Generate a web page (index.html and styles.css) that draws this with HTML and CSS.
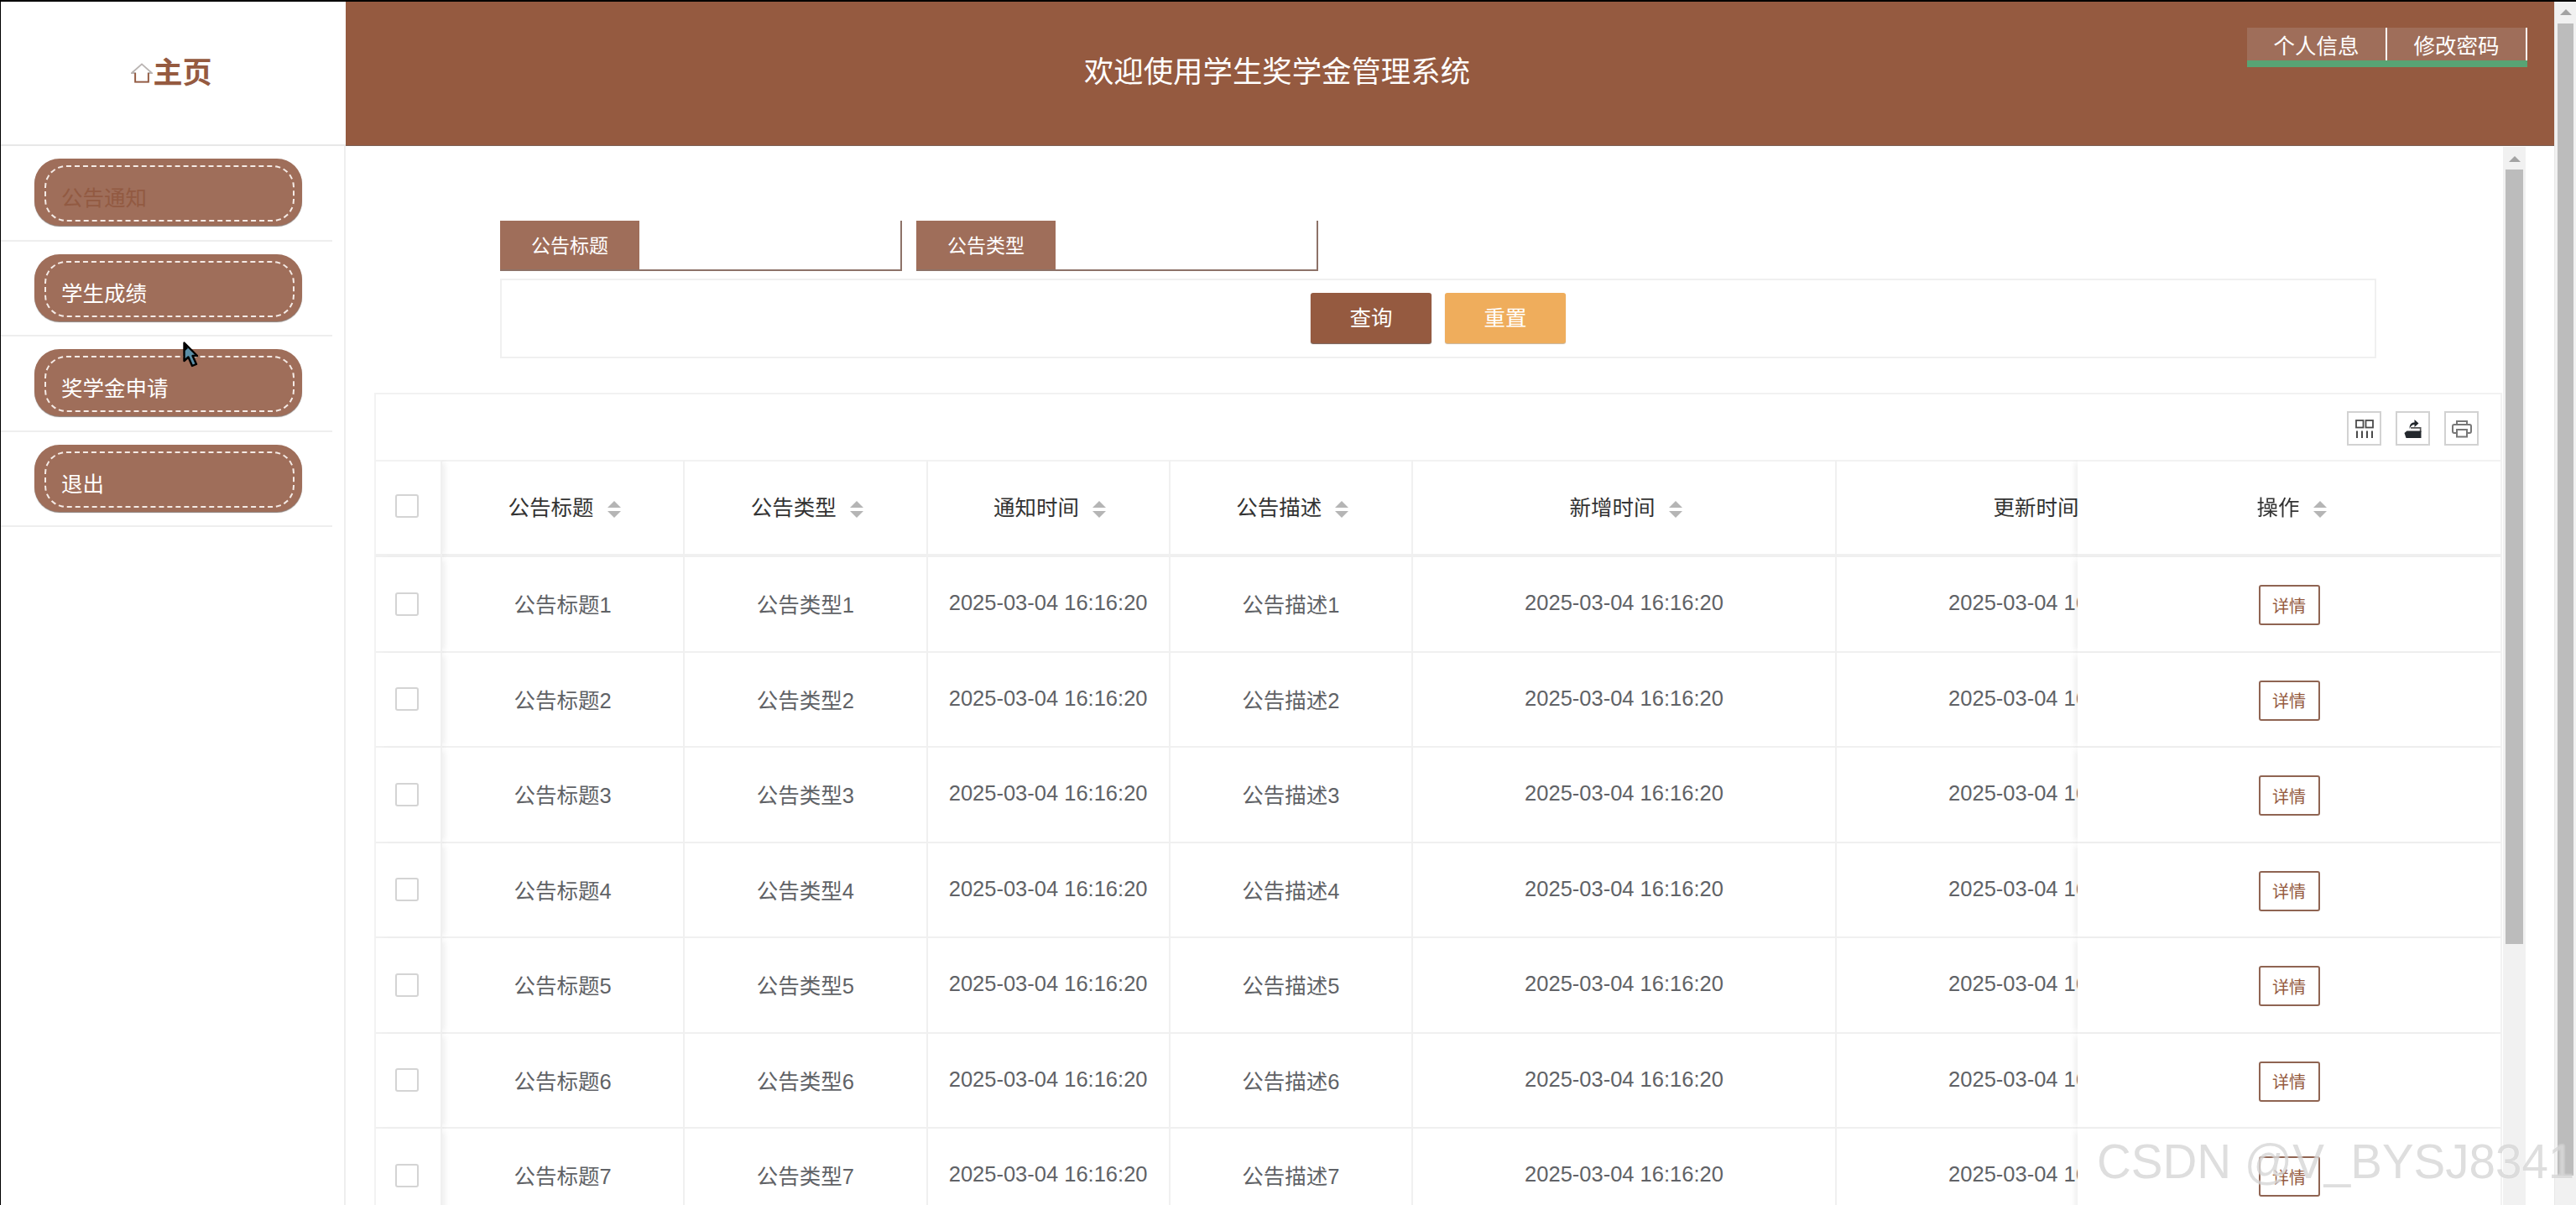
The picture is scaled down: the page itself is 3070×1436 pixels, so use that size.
FILE: index.html
```html
<!DOCTYPE html>
<html lang="zh-CN">
<head>
  <meta charset="utf-8">
  <title>学生奖学金管理系统</title>
  <link rel="stylesheet" href="styles.css">
</head>
<body>
  <div class="page">
    <div class="logo">
      <svg class="logo-icon" viewBox="0 0 28 26" width="26" height="24">
        <path d="M1 13 L14 1.5 L27 13 H22.5 V24.5 H5.5 V13 Z" fill="none" stroke="#b9b4b2" stroke-width="2"/>
        <path d="M5.5 13 V24.5 H22.5 V13" fill="none" stroke="#955a40" stroke-width="2"/>
      </svg>
      <span>主页</span>
    </div>
    <header class="topbar">
      <h1 class="topbar-title">欢迎使用学生奖学金管理系统</h1>
      <div class="topbar-links">
        <a class="topbar-link">个人信息</a>
        <a class="topbar-link">修改密码</a>
      </div>
    </header>
    <nav class="sidebar">
      <div class="menu-item"><div class="menu-pill current"><span>公告通知</span></div></div>
      <div class="menu-item"><div class="menu-pill"><span>学生成绩</span></div></div>
      <div class="menu-item"><div class="menu-pill"><span>奖学金申请</span></div></div>
      <div class="menu-item"><div class="menu-pill"><span>退出</span></div></div>
    </nav>
    <main class="main">
      <div class="content">
        <div class="search-fields">
          <div class="field"><label class="field-label">公告标题</label><div class="field-input"></div></div>
          <div class="field"><label class="field-label">公告类型</label><div class="field-input"></div></div>
        </div>
        <div class="search-actions">
          <button class="btn btn-query">查询</button>
          <button class="btn btn-reset">重置</button>
        </div>
        <section class="table-card">
          <div class="toolbar">
            <div class="tool-btn">
              <svg viewBox="0 0 22 22" width="22" height="22" fill="none" stroke="#4a4a4a">
                <rect x="1" y="1" width="8.5" height="8.5" stroke-width="1.8"/>
                <rect x="12.5" y="1" width="8.5" height="8.5" stroke-width="1.8"/>
                <path d="M2 13.5 V22 M8 13.5 V22 M14 13.5 V22 M20 13.5 V22" stroke-width="2"/>
              </svg>
            </div>
            <div class="tool-btn">
              <svg viewBox="0 0 22 22" width="22" height="22">
                <path d="M8 9 H20.5 V15 H18.8 V10.8 H8 Z" fill="#555"/>
                <path d="M0.5 16 L3.5 13.5 H20.5 V22 H2.5 Z" fill="#23282d"/>
                <path d="M6.5 11 C6.5 5.5 9 3.5 12.5 3.5 V0 L17.5 4.5 L12.5 9 V6 C10 6 8 8 6.5 11 Z" fill="#23282d"/>
              </svg>
            </div>
            <div class="tool-btn">
              <svg viewBox="0 0 24 22" width="24" height="22" fill="none" stroke="#777" stroke-width="2">
                <path d="M6 6 V2 H18 V6"/>
                <path d="M6 16 H3 Q1 16 1 14 V8 Q1 6 3 6 H21 Q23 6 23 8 V14 Q23 16 21 16 H18"/>
                <path d="M6 12 H18 V20.5 H6 Z"/>
              </svg>
            </div>
          </div>
          <div class="table-wrap">
            <table class="data-table">
              <colgroup>
                <col class="col-check"><col class="col-short"><col class="col-short"><col class="col-short"><col class="col-short"><col class="col-long"><col class="col-long"><col class="col-op">
              </colgroup>
              <thead>
                <tr>
                  <th class="fixed-left"><span class="checkbox"></span></th>
                  <th>公告标题<i class="sort"></i></th>
                  <th>公告类型<i class="sort"></i></th>
                  <th>通知时间<i class="sort"></i></th>
                  <th>公告描述<i class="sort"></i></th>
                  <th>新增时间<i class="sort"></i></th>
                  <th>更新时间<i class="sort"></i></th>
                  <th class="fixed-right">操作<i class="sort"></i></th>
                </tr>
              </thead>
              <tbody>
                <tr><td class="fixed-left"><span class="checkbox"></span></td><td>公告标题1</td><td>公告类型1</td><td>2025-03-04 16:16:20</td><td>公告描述1</td><td>2025-03-04 16:16:20</td><td>2025-03-04 16:16:20</td><td class="fixed-right"><button class="btn-detail">详情</button></td></tr>
                <tr><td class="fixed-left"><span class="checkbox"></span></td><td>公告标题2</td><td>公告类型2</td><td>2025-03-04 16:16:20</td><td>公告描述2</td><td>2025-03-04 16:16:20</td><td>2025-03-04 16:16:20</td><td class="fixed-right"><button class="btn-detail">详情</button></td></tr>
                <tr><td class="fixed-left"><span class="checkbox"></span></td><td>公告标题3</td><td>公告类型3</td><td>2025-03-04 16:16:20</td><td>公告描述3</td><td>2025-03-04 16:16:20</td><td>2025-03-04 16:16:20</td><td class="fixed-right"><button class="btn-detail">详情</button></td></tr>
                <tr><td class="fixed-left"><span class="checkbox"></span></td><td>公告标题4</td><td>公告类型4</td><td>2025-03-04 16:16:20</td><td>公告描述4</td><td>2025-03-04 16:16:20</td><td>2025-03-04 16:16:20</td><td class="fixed-right"><button class="btn-detail">详情</button></td></tr>
                <tr><td class="fixed-left"><span class="checkbox"></span></td><td>公告标题5</td><td>公告类型5</td><td>2025-03-04 16:16:20</td><td>公告描述5</td><td>2025-03-04 16:16:20</td><td>2025-03-04 16:16:20</td><td class="fixed-right"><button class="btn-detail">详情</button></td></tr>
                <tr><td class="fixed-left"><span class="checkbox"></span></td><td>公告标题6</td><td>公告类型6</td><td>2025-03-04 16:16:20</td><td>公告描述6</td><td>2025-03-04 16:16:20</td><td>2025-03-04 16:16:20</td><td class="fixed-right"><button class="btn-detail">详情</button></td></tr>
                <tr><td class="fixed-left"><span class="checkbox"></span></td><td>公告标题7</td><td>公告类型7</td><td>2025-03-04 16:16:20</td><td>公告描述7</td><td>2025-03-04 16:16:20</td><td>2025-03-04 16:16:20</td><td class="fixed-right"><button class="btn-detail">详情</button></td></tr>
              </tbody>
            </table>
          </div>
        </section>
      </div>
      <div class="scrollbar inner-scrollbar"><i class="scroll-arrow"></i><div class="scroll-thumb"></div></div>
    </main>
  </div>
  <div class="scrollbar outer-scrollbar"><i class="scroll-arrow"></i><div class="scroll-thumb"></div></div>

  <!-- mouse pointer caught in the screenshot -->
  <svg class="pointer" viewBox="0 0 18 31" width="18" height="31">
    <path d="M1.5 1.5 V23 L6.5 18.5 L11 29 L16 27 L11.5 17 H17 Z" fill="#5c8ea6" stroke="#000" stroke-width="2.4" stroke-linejoin="round"/>
    <path d="M1.5 1.5 V12 L6 8 Z" fill="#000"/>
  </svg>
  <div class="watermark">CSDN @V_BYSJ8341</div>
</body>
</html>
```

FILE: styles.css
```css
* {
  box-sizing: border-box;
}

html, body {
  height: 100%;
  margin: 0;
}

body {
  display: flex;
  overflow: hidden;
  border-top: 2px solid #000;
  border-left: 1px solid #000;
  background: #fff;
  font-family: "Liberation Sans", "Noto Sans CJK SC", sans-serif;
  color: #333;
}

.page {
  flex: 1;
  min-width: 0;
  display: grid;
  grid-template-columns: 411px 1fr;
  grid-template-rows: 172px 1fr;
}

/* logo and top bar */
.logo {
  display: flex;
  justify-content: center;
  align-items: center;
  border-bottom: 2px solid #e8e8e8;
  padding: 0 4px 8px 0;
  color: #955a40;
  font-size: 35px;
  font-weight: bold;
}

.logo-icon {
  margin-top: 8px;
}

.topbar {
  position: relative;
  display: flex;
  justify-content: center;
  align-items: center;
  padding: 0 412px 11px 0;
  background: #955a40;
  border-bottom: 1px solid #7d6054;
}

.topbar-title {
  margin: 0;
  color: #fff;
  font-size: 35.4px;
  font-weight: normal;
}

.topbar-links {
  position: absolute;
  top: 31px;
  right: 32px;
  display: flex;
  border-bottom: 8px solid #58a474;
}

.topbar-link {
  width: 167px;
  height: 39px;
  line-height: 44px;
  text-align: center;
  background: #9f6e5a;
  border-right: 2px solid #fff;
  color: #fff;
  font-size: 25.5px;
}

/* sidebar */
.sidebar {
  border-right: 2px solid #eeeeee;
  padding-right: 14px;
}

.menu-item {
  height: 113.5px;
  padding: 15px 0 0 40px;
  border-bottom: 2px solid #eeeeee;
}

.menu-pill {
  width: 319px;
  height: 80px;
  padding: 8px 9px 5px 12px;
  border-radius: 30px;
  background: #9f6e5a;
  box-shadow: 0 1px 1px #8a7f7a;
}

.menu-pill span {
  display: block;
  height: 100%;
  padding: 18px 0 0 18px;
  border: 2px dashed #f5ebe6;
  border-radius: 26px;
  color: #fff;
  font-size: 25.5px;
  line-height: 38px;
}

.menu-pill.current span {
  color: #925a42;
}

/* main area */
.main {
  display: flex;
  min-height: 0;
  padding-right: 34px;
}

.content {
  flex: 1;
  min-width: 0;
  padding: 89px 0 0 34px;
  overflow: hidden;
}

.search-fields {
  display: flex;
  gap: 17px;
  margin-left: 150px;
}

.field {
  display: flex;
  width: 479px;
  height: 60px;
  border-right: 2px solid #8d7268;
  border-bottom: 2px solid #8d7268;
}

.field-label {
  width: 166px;
  background: #9f6e5a;
  color: #fff;
  font-size: 23px;
  line-height: 60px;
  text-align: center;
}

.field-input {
  flex: 1;
}

.search-actions {
  display: flex;
  justify-content: center;
  gap: 16px;
  width: 2236px;
  height: 95px;
  margin: 9px 0 0 150px;
  padding-top: 15px;
  border: 2px solid #f0f0f0;
}

.btn {
  width: 144px;
  height: 60px;
  padding: 0 0 6px;
  border: none;
  border-radius: 3px;
  color: #fff;
  font-family: inherit;
  font-size: 25.5px;
}

.btn-query {
  background: #955a40;
  box-shadow: 0 1px 1px #6f5549;
}

.btn-reset {
  background: #efad5c;
  box-shadow: 0 1px 1px #c9b08e;
}

/* table */
.table-card {
  width: 2536px;
  margin-top: 41px;
  border: 2px solid #f2f2f2;
  border-bottom: none;
}

.toolbar {
  display: flex;
  justify-content: flex-end;
  gap: 17px;
  height: 78px;
  padding: 20px 26px 0 0;
}

.tool-btn {
  display: flex;
  justify-content: center;
  align-items: center;
  width: 41px;
  height: 41px;
  border: 2px solid #d2d2d2;
}

.table-wrap {
  overflow: hidden;
}

.data-table {
  width: 2750px;
  table-layout: fixed;
  border-collapse: separate;
  border-spacing: 0;
  font-size: 25.5px;
}

.col-check { width: 79px; }
.col-short { width: 289.25px; }
.col-long { width: 505px; }
.col-op { width: 504px; }

th, td {
  text-align: center;
  white-space: nowrap;
  overflow: hidden;
  background: #fff;
  border-right: 2px solid #f0f0f0;
  border-bottom: 2px solid #f0f0f0;
}

th {
  height: 116px;
  padding: 0 0 6px 4px;
  border-top: 2px solid #f2f2f2;
  border-bottom-width: 4px;
  color: #333;
  font-weight: normal;
}

td {
  height: 113.5px;
  padding: 0 0 2px;
  color: #606266;
}

th.fixed-left,
td.fixed-left {
  padding-left: 0;
  padding-right: 3px;
}

.fixed-left {
  position: sticky;
  left: 0;
  z-index: 1;
  box-shadow: 6px 0 7px -3px rgba(0, 0, 0, 0.07);
}

.fixed-right {
  position: sticky;
  right: 0;
  z-index: 1;
  border-right: none;
  box-shadow: -6px 0 7px -3px rgba(0, 0, 0, 0.07);
}

th.fixed-right {
  padding-left: 6px;
}

.checkbox {
  display: inline-block;
  width: 28px;
  height: 28px;
  border: 2px solid #d4d4d4;
  border-radius: 3px;
  vertical-align: middle;
  background: #fff;
}

.sort {
  display: inline-block;
  position: relative;
  width: 16px;
  height: 20px;
  margin-left: 16px;
  vertical-align: -3px;
}

.sort::before,
.sort::after {
  content: "";
  position: absolute;
  left: 0;
  border-left: 8px solid transparent;
  border-right: 8px solid transparent;
}

.sort::before {
  top: 0;
  border-bottom: 8px solid #b5b5b5;
}

.sort::after {
  bottom: 0;
  border-top: 8px solid #b5b5b5;
}

.btn-detail {
  width: 73px;
  height: 48px;
  margin-top: 5px;
  padding: 0;
  border: 2px solid #8f6452;
  border-radius: 3px;
  background: #fff;
  color: #955a40;
  font-family: inherit;
  font-size: 20px;
  vertical-align: middle;
}

/* scrollbars */
.scrollbar {
  position: relative;
  flex: none;
  background: #f1f1f1;
}

.scroll-arrow {
  display: block;
  width: 0;
  margin: 0 auto;
  border-left: 7px solid transparent;
  border-right: 7px solid transparent;
  border-bottom: 7px solid #a3a3a3;
}

.inner-scrollbar {
  width: 27px;
  margin-top: 1px;
  padding: 11px 3px 0;
}

.inner-scrollbar .scroll-thumb {
  height: 923px;
  margin-top: 9px;
  background: #bcbcbc;
}

.outer-scrollbar {
  width: 26px;
  padding: 9px 3px 0;
  border-left: 1px solid #e8e8e8;
}

.outer-scrollbar .scroll-thumb {
  height: 1373px;
  margin-top: 10px;
  background: #bcbcbc;
}

/* things lying over the page */
.pointer {
  position: absolute;
  left: 218px;
  top: 407px;
  z-index: 5;
}

.watermark {
  position: absolute;
  left: 2499px;
  top: 1350px;
  z-index: 5;
  color: rgba(190, 190, 190, 0.5);
  font-size: 56.5px;
  line-height: 70px;
  white-space: nowrap;
  text-shadow: 0 0 2px rgba(255, 255, 255, 0.7);
}
```
